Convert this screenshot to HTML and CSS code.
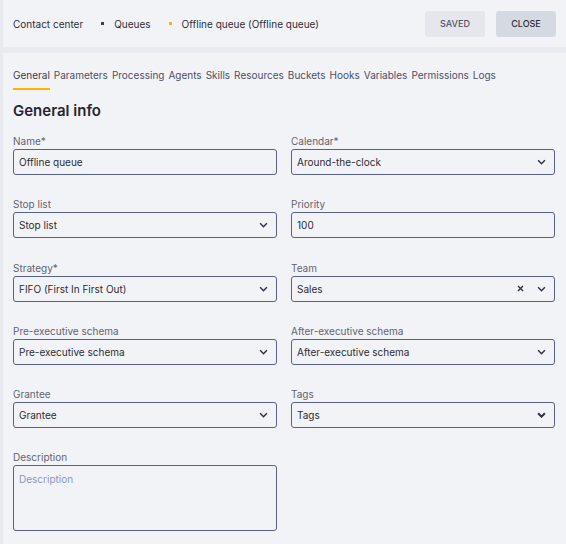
FILE: index.html
```html
<!DOCTYPE html>
<html lang="en">
<head>
<meta charset="utf-8">
<title>Offline queue</title>
<link rel="stylesheet" href="styles.css">
</head>
<body>
  <header class="topbar">
    <nav class="crumbs">
      <span class="crumb">Contact center</span>
      <span class="sep"></span>
      <span class="crumb">Queues</span>
      <span class="sep sep-active"></span>
      <span class="crumb">Offline queue (Offline queue)</span>
    </nav>
    <div class="actions">
      <button class="btn btn-saved">SAVED</button>
      <button class="btn btn-close">CLOSE</button>
    </div>
  </header>

  <main class="panel">
    <div class="tabs">
      <span class="tab tab-active">General</span>
      <span class="tab">Parameters</span>
      <span class="tab">Processing</span>
      <span class="tab">Agents</span>
      <span class="tab">Skills</span>
      <span class="tab">Resources</span>
      <span class="tab">Buckets</span>
      <span class="tab">Hooks</span>
      <span class="tab">Variables</span>
      <span class="tab">Permissions</span>
      <span class="tab">Logs</span>
    </div>

    <h2 class="section-title">General info</h2>

    <div class="form-grid">
      <div class="field">
        <label class="label">Name*</label>
        <div class="control"><span class="value">Offline queue</span></div>
      </div>
      <div class="field">
        <label class="label">Calendar*</label>
        <div class="control"><span class="value">Around-the-clock</span>
          <svg class="chev" viewBox="0 0 8 5"><path d="M1 1l3 3 3-3"/></svg></div>
      </div>

      <div class="field">
        <label class="label">Stop list</label>
        <div class="control"><span class="value">Stop list</span>
          <svg class="chev" viewBox="0 0 8 5"><path d="M1 1l3 3 3-3"/></svg></div>
      </div>
      <div class="field">
        <label class="label">Priority</label>
        <div class="control"><span class="value">100</span></div>
      </div>

      <div class="field">
        <label class="label">Strategy*</label>
        <div class="control"><span class="value">FIFO (First In First Out)</span>
          <svg class="chev" viewBox="0 0 8 5"><path d="M1 1l3 3 3-3"/></svg></div>
      </div>
      <div class="field">
        <label class="label">Team</label>
        <div class="control"><span class="value">Sales</span>
          <svg class="clear" viewBox="0 0 7 7"><path d="M1 1l5 5M6 1l-5 5"/></svg>
          <svg class="chev" viewBox="0 0 8 5"><path d="M1 1l3 3 3-3"/></svg></div>
      </div>

      <div class="field">
        <label class="label">Pre-executive schema</label>
        <div class="control"><span class="value">Pre-executive schema</span>
          <svg class="chev" viewBox="0 0 8 5"><path d="M1 1l3 3 3-3"/></svg></div>
      </div>
      <div class="field">
        <label class="label">After-executive schema</label>
        <div class="control"><span class="value">After-executive schema</span>
          <svg class="chev" viewBox="0 0 8 5"><path d="M1 1l3 3 3-3"/></svg></div>
      </div>

      <div class="field">
        <label class="label">Grantee</label>
        <div class="control"><span class="value">Grantee</span>
          <svg class="chev" viewBox="0 0 8 5"><path d="M1 1l3 3 3-3"/></svg></div>
      </div>
      <div class="field">
        <label class="label">Tags</label>
        <div class="control"><span class="value">Tags</span>
          <svg class="chev chev-bold" viewBox="0 0 8 5"><path d="M1 1l3 3 3-3"/></svg></div>
      </div>

      <div class="field">
        <label class="label">Description</label>
        <div class="control control-area"><span class="placeholder">Description</span></div>
      </div>
    </div>
  </main>
</body>
</html>
```

FILE: styles.css
```css
* { box-sizing: border-box; }

html, body {
  margin: 0;
  height: 100%;
}

body {
  background: #e9eaef;
  font-family: "Inter", "Liberation Sans", sans-serif;
  font-size: 10px;
  color: #2c2c34;
}

/* top bar with breadcrumbs and actions */
.topbar {
  margin-left: 3px;
  height: 47px;
  background: #f2f3f7;
  display: flex;
  align-items: center;
  justify-content: space-between;
  padding: 0 10px;
}

.crumbs {
  display: flex;
  align-items: center;
  font-size: 10px;
  color: #2e2e38;
}

.sep {
  width: 3px;
  height: 3px;
  background: #3b3f55;
  margin: 0 10px 0 18px;
}

.sep-active { background: #ffb000; }

.actions {
  display: flex;
  gap: 11px;
}

.btn {
  width: 60px;
  height: 26px;
  border: 0;
  border-radius: 3px;
  font-family: inherit;
  font-size: 9px;
  font-weight: 500;
  padding: 0;
}

.btn-saved { background: #e6e7ed; color: #50536a; }
.btn-close { background: #d5d9e2; color: #2c2d3a; }

/* main form panel */
.panel {
  margin: 6px 0 0 3px;
  background: #f2f3f7;
  padding: 0 10px;
  height: calc(100% - 53px);
}

.tabs {
  display: flex;
  gap: 4px;
  padding-top: 11px;
  color: #4b4f68;
  font-size: 10px;
}

.tab {
  padding: 5px 0 7px;
  border-bottom: 2px solid transparent;
}

.tab-active {
  color: #3a3c4c;
  border-bottom-color: #ffb000;
}

.section-title {
  margin: 12px 0 15px;
  font-size: 15px;
  font-weight: 600;
  color: #262630;
  line-height: 18px;
}

.form-grid {
  display: grid;
  grid-template-columns: 264px 264px;
  column-gap: 14px;
  row-gap: 23.3px;
}

.label {
  display: block;
  height: 14px;
  line-height: 12px;
  font-size: 10px;
  color: #62636f;
}

.control {
  height: 26px;
  border: 1px solid #5a6188;
  border-radius: 3px;
  display: flex;
  align-items: center;
  padding: 0 8px 0 5px;
  color: #2c2c34;
}

.value { flex: 1; }

.chev {
  width: 9px;
  height: 6px;
  fill: none;
  stroke: #2f3245;
  stroke-width: 1.3;
}

.chev-bold { stroke-width: 1.8; }

.clear {
  width: 7px;
  height: 7px;
  margin-right: 13px;
  fill: none;
  stroke: #2f3245;
  stroke-width: 1.4;
}

.control-area {
  height: 66px;
  align-items: flex-start;
  padding-top: 7px;
}

.placeholder { color: #8898bd; }
```
